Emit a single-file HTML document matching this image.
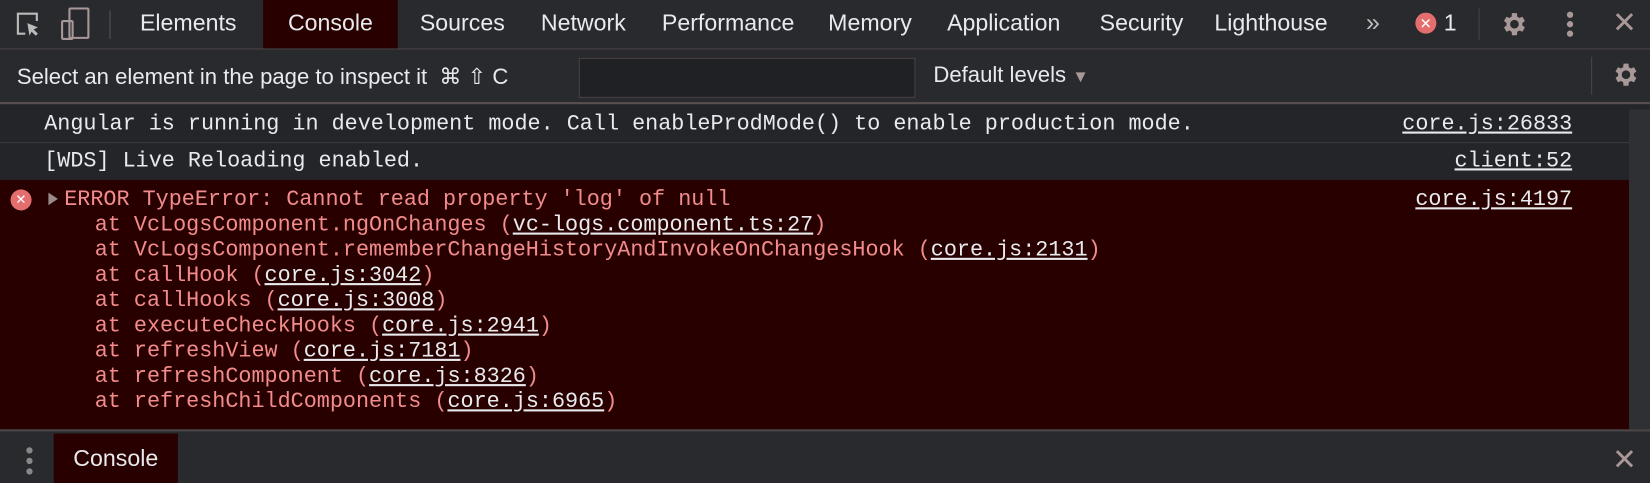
<!DOCTYPE html>
<html><head><meta charset="utf-8"><style>
*{margin:0;padding:0;box-sizing:border-box}
html,body{width:1650px;height:483px;overflow:hidden;background:#242528}
#w{width:1568px;height:459px;transform:scale(1.05230);transform-origin:0 0;position:relative;font-family:"Liberation Sans",sans-serif;color:#e8eaed;background:#242528}
.abs{position:absolute}
.tb{top:0;left:0;width:1568px;height:47px;background:#292a2d;border-bottom:1px solid #4a4546}
.tab{position:absolute;top:0;height:46px;line-height:44px;font-size:22px;color:#e8eaed}
.fb{top:47px;left:0;width:1568px;height:52px;background:#292a2d;border-bottom:2px solid #5a4f50}
.mono{font-family:"Liberation Mono",monospace;font-size:20.7px;white-space:pre}
.row{left:0;width:1548px;border-bottom:1px solid #3a3a3d}
a{color:#e8eaed;text-decoration:underline}
.err{top:171px;left:0;width:1548px;height:237px;background:#280000;color:#f28b8b}
.err a{color:#e8eaed}
.bb{top:408px;left:0;width:1568px;height:51px;background:#292a2d;border-top:2px solid #4a4546}
</style></head><body><div id="w">
<div class="abs tb">
<svg class="abs" style="left:14px;top:10px" width="26" height="26" viewBox="0 0 26 26" fill="none" stroke="#bbb" stroke-width="2"><path d="M10 22H3V3h18v7"/><path d="M12 12l10 4-4 2 4 4-2 2-4-4-2 4z" fill="#bbb" stroke="none"/></svg>
<svg class="abs" style="left:57px;top:7px" width="30" height="32" viewBox="0 0 30 32" fill="none" stroke="#a89898" stroke-width="2"><rect x="9" y="1" width="18" height="28" rx="1"/><rect x="2" y="13" width="10" height="17" rx="1"/></svg>
<div class="abs" style="left:104px;top:10px;width:1px;height:27px;background:#555"></div>
<div class="tab" style="left:133px">Elements</div>
<div class="tab" style="left:250px;width:128px;background:#280000;text-align:center">Console</div>
<div class="tab" style="left:399px">Sources</div>
<div class="tab" style="left:514px">Network</div>
<div class="tab" style="left:629px">Performance</div>
<div class="tab" style="left:787px">Memory</div>
<div class="tab" style="left:900px">Application</div>
<div class="tab" style="left:1045px">Security</div>
<div class="tab" style="left:1154px">Lighthouse</div>
<div class="tab" style="left:1298px;font-size:24px;color:#bbb">»</div>
<div class="abs" style="left:1345px;top:12px;width:20px;height:20px;border-radius:50%;background:#e46e6e;color:#fff;font-size:14px;text-align:center;line-height:20px">✕</div>
<div class="tab" style="left:1372px">1</div>
<div class="abs" style="left:1405px;top:8px;width:1px;height:30px;background:#444"></div>
<svg class="abs" style="left:1424px;top:9px" width="28" height="28" viewBox="0 0 24 24"><path fill="#a89898" d="M19.4 13a7.5 7.5 0 000-2l2.1-1.6-2-3.5-2.5 1a7.3 7.3 0 00-1.7-1L15 3h-4l-.3 2.9a7.3 7.3 0 00-1.7 1l-2.5-1-2 3.5L6.6 11a7.5 7.5 0 000 2l-2.1 1.6 2 3.5 2.5-1a7.3 7.3 0 001.7 1L11 21h4l.3-2.9a7.3 7.3 0 001.7-1l2.5 1 2-3.5zM13 15.5a3.5 3.5 0 110-7 3.5 3.5 0 010 7z"/></svg>
<div class="abs" style="left:1489px;top:11px;width:6px;height:6px;border-radius:50%;background:#a89898;box-shadow:0 9px 0 #a89898,0 18px 0 #a89898"></div>
<div class="tab" style="left:1532px;font-size:28px;color:#a89898">✕</div>
</div>
<div class="abs fb">
<div class="abs" style="left:16px;top:14px;font-size:21px">Select an element in the page to inspect it &nbsp;⌘ ⇧ C</div>
<div class="abs" style="left:550px;top:8px;width:320px;height:38px;background:#202124;border:1px solid #4a4142"></div>
<div class="abs" style="left:887px;top:13px;font-size:21px">Default levels <span style="color:#a89898;font-size:16px">▼</span></div>
<div class="abs" style="left:1512px;top:7px;width:1px;height:36px;background:#444"></div>
<svg class="abs" style="left:1530px;top:10px" width="28" height="28" viewBox="0 0 24 24"><path fill="#a89898" d="M19.4 13a7.5 7.5 0 000-2l2.1-1.6-2-3.5-2.5 1a7.3 7.3 0 00-1.7-1L15 3h-4l-.3 2.9a7.3 7.3 0 00-1.7 1l-2.5-1-2 3.5L6.6 11a7.5 7.5 0 000 2l-2.1 1.6 2 3.5 2.5-1a7.3 7.3 0 001.7 1L11 21h4l.3-2.9a7.3 7.3 0 001.7-1l2.5 1 2-3.5zM13 15.5a3.5 3.5 0 110-7 3.5 3.5 0 010 7z"/></svg>
</div>
<div class="abs" style="left:1548px;top:104px;width:20px;height:304px;background:#2f3033"></div>
<div class="abs row" style="top:101px;height:35px"><div class="abs mono" style="left:42px;top:6px">Angular is running in development mode. Call enableProdMode() to enable production mode.</div><div class="abs mono" style="right:54px;top:6px"><a>core.js:26833</a></div></div>
<div class="abs row" style="top:136px;height:35px;border:none"><div class="abs mono" style="left:42px;top:6px">[WDS] Live Reloading enabled.</div><div class="abs mono" style="right:54px;top:6px"><a>client:52</a></div></div>
<div class="abs err">
<div class="abs" style="left:10px;top:9px;width:20px;height:20px;border-radius:50%;background:#e46e6e;color:#fff;font-size:13px;text-align:center;line-height:20px">✕</div>
<div class="abs" style="left:46px;top:12px;width:0;height:0;border-left:9px solid #9a8a8a;border-top:6px solid transparent;border-bottom:6px solid transparent"></div>
<div class="abs mono" style="left:61px;top:8px;line-height:24px">ERROR TypeError: Cannot read property 'log' of null</div>
<div class="abs mono" style="left:90px;top:32px;line-height:24px">at VcLogsComponent.ngOnChanges (<a>vc-logs.component.ts:27</a>)
at VcLogsComponent.rememberChangeHistoryAndInvokeOnChangesHook (<a>core.js:2131</a>)
at callHook (<a>core.js:3042</a>)
at callHooks (<a>core.js:3008</a>)
at executeCheckHooks (<a>core.js:2941</a>)
at refreshView (<a>core.js:7181</a>)
at refreshComponent (<a>core.js:8326</a>)
at refreshChildComponents (<a>core.js:6965</a>)</div>
<div class="abs mono" style="right:54px;top:8px"><a>core.js:4197</a></div>
</div>
<div class="abs bb">
<div class="abs" style="left:25px;top:15px;width:6px;height:6px;border-radius:50%;background:#888;box-shadow:0 10px 0 #888,0 20px 0 #888"></div>
<div class="abs" style="left:51px;top:2px;width:118px;height:49px;background:#280000;font-size:22px;text-align:center;line-height:48px">Console</div>
<div class="abs" style="left:1532px;top:10px;font-size:28px;color:#a89898">✕</div>
</div>
</div></body></html>
